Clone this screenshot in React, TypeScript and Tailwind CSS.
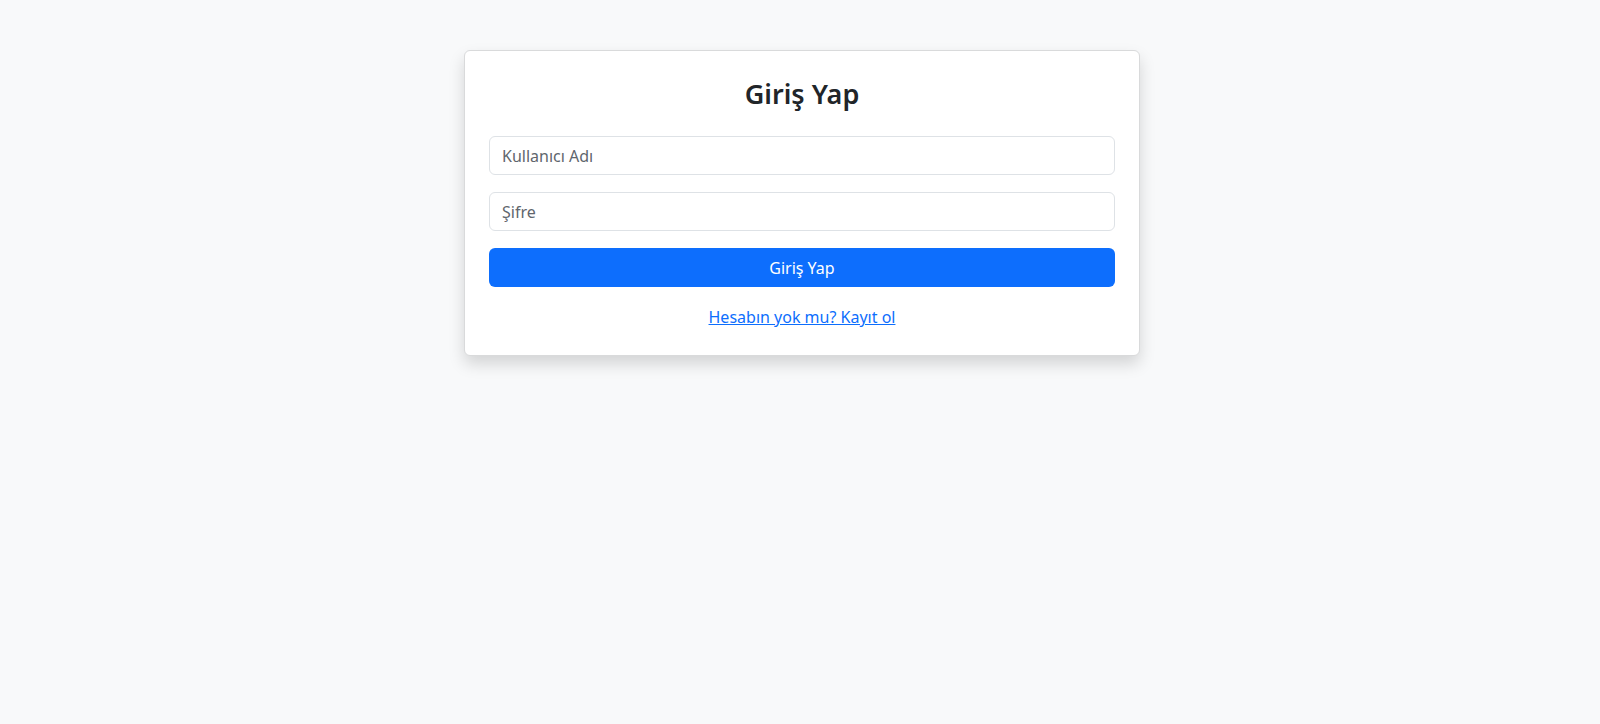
import React, { useState } from 'react';

export default function App() {
    const [username, setUsername] = useState('');
    const [password, setPassword] = useState('');

    const handleSubmit = (e: React.FormEvent<HTMLFormElement>) => {
        e.preventDefault();
    };

    return (
        <div
            className="min-h-screen bg-[#f8f9fa] pt-[50px] pl-1 text-[#212529]"
            style={{ fontFamily: '"Noto Sans", "Open Sans", sans-serif' }}
        >
            <div className="mx-auto w-[676px] rounded-[6px] border border-[#d9dadb] bg-white px-6 pt-6 pb-[26px] shadow-[0_8px_16px_rgba(0,0,0,0.15)]">
                <h2 className="mb-6 text-center text-[27px] leading-[37px] font-semibold">
                    Giriş Yap
                </h2>

                <form onSubmit={handleSubmit}>
                    <input
                        type="text"
                        placeholder="Kullanıcı Adı"
                        value={username}
                        onChange={e => setUsername(e.target.value)}
                        className="mb-[17px] block h-[39px] w-full rounded-[6px] border border-[#dee2e6] px-3 text-base text-[#212529] outline-none placeholder:text-[#5f666d]"
                    />
                    <input
                        type="password"
                        placeholder="Şifre"
                        value={password}
                        onChange={e => setPassword(e.target.value)}
                        className="mb-[17px] block h-[39px] w-full rounded-[6px] border border-[#dee2e6] px-3 text-base text-[#212529] outline-none placeholder:text-[#5f666d]"
                    />
                    <button
                        type="submit"
                        className="block h-[39px] w-full rounded-[6px] bg-[#0d6efd] text-base text-white"
                    >
                        Giriş Yap
                    </button>
                </form>

                <div className="mt-[18px] text-center leading-6">
                    <a href="#" className="text-base text-[#0d6efd] underline">
                        Hesabın yok mu? Kayıt ol
                    </a>
                </div>
            </div>
        </div>
    );
}
